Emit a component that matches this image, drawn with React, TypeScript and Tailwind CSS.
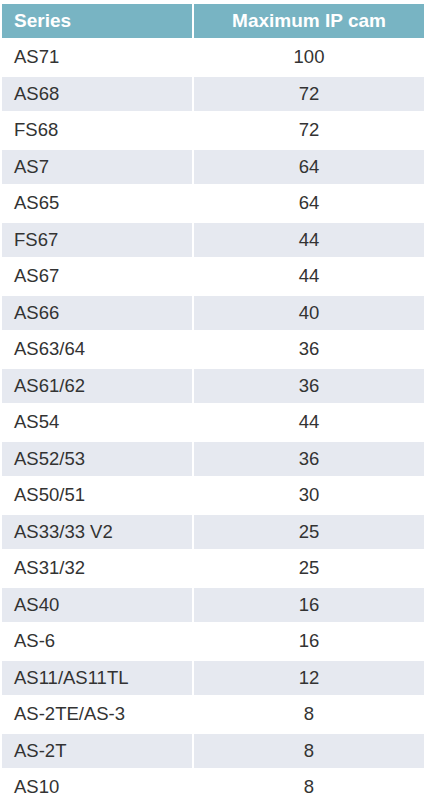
import React from "react";

const rows: [string, string][] = [
  ["AS71", "100"],
  ["AS68", "72"],
  ["FS68", "72"],
  ["AS7", "64"],
  ["AS65", "64"],
  ["FS67", "44"],
  ["AS67", "44"],
  ["AS66", "40"],
  ["AS63/64", "36"],
  ["AS61/62", "36"],
  ["AS54", "44"],
  ["AS52/53", "36"],
  ["AS50/51", "30"],
  ["AS33/33 V2", "25"],
  ["AS31/32", "25"],
  ["AS40", "16"],
  ["AS-6", "16"],
  ["AS11/AS11TL", "12"],
  ["AS-2TE/AS-3", "8"],
  ["AS-2T", "8"],
  ["AS10", "8"],
];

export default function App() {
  return (
    <div
      className="w-[429px] h-[805px] overflow-hidden bg-white pt-[4px] pl-[2px]"
      style={{ fontFamily: '"Liberation Sans", Arial, sans-serif' }}
    >
      <div className="flex flex-col gap-[2px]">
        <div className="flex gap-[2px] h-[34px]">
          <div className="w-[190px] bg-[#78b4c3] text-white font-bold text-[19px] flex items-center pl-[12px]">
            Series
          </div>
          <div className="w-[230px] bg-[#78b4c3] text-white font-bold text-[19px] flex items-center justify-center">
            Maximum IP cam
          </div>
        </div>
        {rows.map(([s, n], i) => {
          const bg = i % 2 === 1 ? "bg-[#e6e9f0]" : "bg-white";
          return (
            <div key={s} className="flex gap-[2px] h-[34.5px]">
              <div
                className={`w-[190px] ${bg} text-[#333333] text-[18.5px] flex items-center pl-[12px]`}
              >
                {s}
              </div>
              <div
                className={`w-[230px] ${bg} text-[#333333] text-[18.5px] flex items-center justify-center`}
              >
                {n}
              </div>
            </div>
          );
        })}
      </div>
    </div>
  );
}
